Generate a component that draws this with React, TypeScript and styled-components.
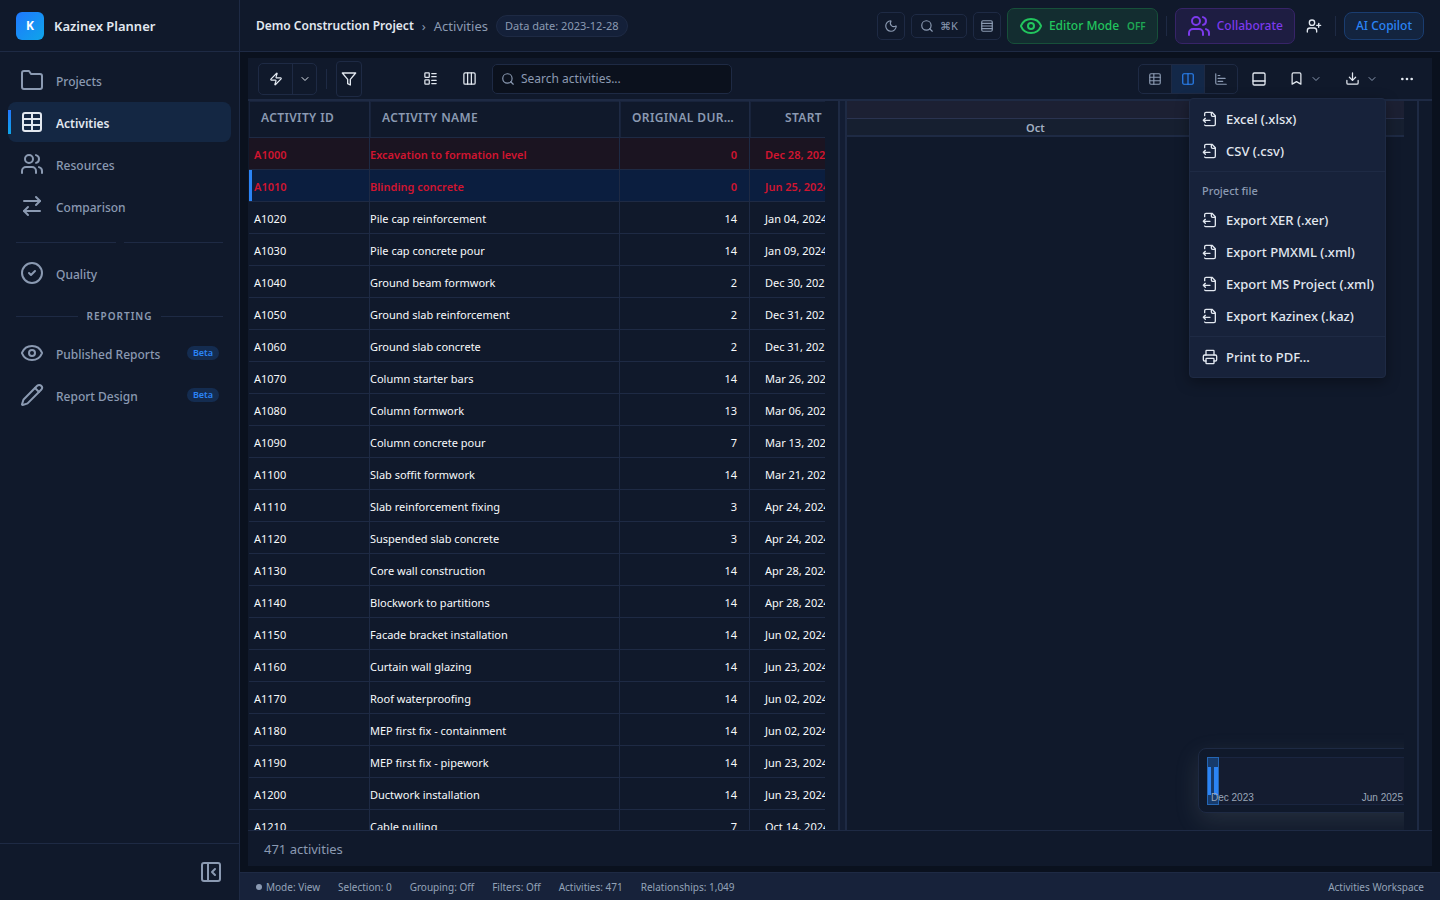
import React from 'react';
import styled, { createGlobalStyle, css } from 'styled-components';
import {
  ArrowRightLeft, Bookmark, ChartBar, ChevronDown, CircleCheck, Columns2, Columns3, Download, Ellipsis, Eye,
  LayoutList, Moon, PanelBottom, PanelLeftClose, Pencil, Printer, Rows4, Search, Table, UserPlus, Users, Zap,
} from 'lucide-react';

const c = {
  canvas: '#0a111e',
  surface: '#10192b',
  raised: '#17223a',
  line: '#1e2a44',
  text: '#e2e8f0',
  muted: '#8b9ab2',
  blue: '#2b84f6',
  red: '#d01530',
};

const Global = createGlobalStyle`
  *, *::before, *::after { box-sizing: border-box; }
  body { margin: 0; background: ${c.canvas}; color: ${c.text}; font: 12px/16px 'Noto Sans', 'Open Sans', sans-serif; }
  button, input { font: inherit; color: inherit; }
  button { background: none; border: 0; padding: 0; cursor: pointer; }
  svg { display: block; flex: none; }
`;

const Shell = styled.div`
  display: grid;
  grid-template-columns: 240px minmax(0, 1fr);
  height: 100vh;
  overflow: hidden;
`;

const Sidebar = styled.aside`
  display: flex;
  flex-direction: column;
  background: ${c.surface};
  border-right: 1px solid ${c.line};
`;

const Brand = styled.div`
  display: flex;
  align-items: center;
  gap: 10px;
  height: 52px;
  padding: 0 16px;
  border-bottom: 1px solid ${c.line};
  font-size: 13px;
  font-weight: 600;
`;

const BrandMark = styled.span`
  display: grid;
  place-items: center;
  width: 28px;
  height: 28px;
  border-radius: 6px;
  background: linear-gradient(135deg, #1f78ff, #0ea5e9);
  color: #fff;
  font-size: 12px;
  font-weight: 700;
`;

const Nav = styled.nav`
  display: flex;
  flex: 1;
  flex-direction: column;
  gap: 2px;
  padding: 8px;
`;

const NavLink = styled.a<{ $active?: boolean }>`
  position: relative;
  display: flex;
  align-items: center;
  gap: 12px;
  height: 40px;
  padding: 0 12px;
  border-radius: 8px;
  color: ${p => (p.$active ? c.text : c.muted)};
  background: ${p => (p.$active ? '#142743' : 'transparent')};
  font-size: 12px;
  font-weight: ${p => (p.$active ? 600 : 500)};
  text-decoration: none;
  ${p => p.$active && css`
    &::before {
      content: '';
      position: absolute;
      left: 0;
      top: 8px;
      width: 3px;
      height: 24px;
      background: linear-gradient(#2277ff, #0ea5e9);
    }
  `}
`;

const NavText = styled.span`
  padding-top: 3px;
`;

const Beta = styled.span`
  margin-left: auto;
  padding: 0 6px;
  border-radius: 7px;
  background: #142c50;
  color: ${c.blue};
  font-size: 9px;
  font-weight: 600;
  line-height: 14px;
`;

const Divider = styled.div`
  display: flex;
  align-items: center;
  gap: 8px;
  margin: 14px 8px 8px;
  color: ${c.muted};
  font-size: 10px;
  font-weight: 600;
  letter-spacing: 1px;
  line-height: 14px;
  &::before, &::after { content: ''; flex: 1; height: 1px; background: ${c.line}; }
`;

const SideFoot = styled.div`
  display: flex;
  justify-content: flex-end;
  padding: 16px;
  border-top: 1px solid ${c.line};
  color: ${c.muted};
`;

const Main = styled.div`
  display: flex;
  flex-direction: column;
  min-width: 0;
  min-height: 0;
`;

const TopBar = styled.header`
  display: flex;
  align-items: center;
  flex: none;
  height: 52px;
  padding: 0 16px;
  background: ${c.surface};
  border-bottom: 1px solid ${c.line};
  color: ${c.muted};
`;

const Crumbs = styled.div`
  display: flex;
  align-items: center;
  gap: 8px;
  margin-right: auto;
  font-size: 13px;
  strong { color: ${c.text}; font-size: 12px; font-weight: 600; }
`;

const DatePill = styled.span`
  padding: 0 8px;
  border: 1px solid ${c.line};
  border-radius: 11px;
  background: #142039;
  font-size: 11px;
  line-height: 20px;
`;

const TopActions = styled.div`
  display: flex;
  align-items: center;
  gap: 6px;
`;

const OutlineButton = styled.button<{ $h: number }>`
  display: flex;
  align-items: center;
  justify-content: center;
  gap: 6px;
  min-width: 28px;
  height: ${p => p.$h}px;
  padding: 0 ${p => (p.$h === 24 ? 8 : 0)}px;
  border: 1px solid ${c.line};
  border-radius: 5px;
  font-size: 11px;
`;

const tones = {
  green: ['#22c55e', '#132d30', '#17503a'],
  purple: ['#7c3aed', '#1e1d42', '#372468'],
  blue: [c.blue, '#13243f', '#1a3d70'],
};

const ToneButton = styled.button<{ $tone: keyof typeof tones; $small?: boolean }>`
  display: flex;
  align-items: center;
  gap: 6px;
  height: ${p => (p.$small ? 28 : 36)}px;
  padding: 1px 11px 0;
  border: 1px solid ${p => tones[p.$tone][2]};
  border-radius: ${p => (p.$small ? 8 : 7)}px;
  background: ${p => tones[p.$tone][1]};
  color: ${p => tones[p.$tone][0]};
  font-size: 12px;
  font-weight: 500;
  small { margin-left: 2px; font-size: 10px; font-weight: 600; opacity: .8; }
`;

const Rule = styled.span<{ $m: number }>`
  width: 1px;
  height: 20px;
  margin: 0 ${p => p.$m}px;
  background: ${c.line};
`;

const Workspace = styled.main`
  display: flex;
  flex: 1;
  flex-direction: column;
  min-height: 0;
  margin: 6px 8px;
  background: ${c.surface};
`;

const Toolbar = styled.div`
  display: flex;
  align-items: center;
  flex: none;
  height: 43px;
  padding: 0 10px;
  border-bottom: 2px solid ${c.line};
`;

const Group = styled.div`
  display: flex;
  border: 1px solid ${c.line};
  border-radius: 5px;
  overflow: hidden;
  button + button { border-left: 1px solid ${c.line}; }
`;

const ToolButton = styled.button<{ $w: number; $h?: number; $on?: boolean; $dim?: boolean; $framed?: boolean }>`
  display: flex;
  align-items: center;
  justify-content: center;
  gap: 6px;
  width: ${p => p.$w}px;
  height: ${p => p.$h ?? 28}px;
  color: ${p => (p.$on ? c.blue : p.$dim ? c.muted : c.text)};
  background: ${p => (p.$on ? '#132848' : 'transparent')};
  ${p => p.$framed && css`border: 1px solid ${c.line}; border-radius: 4px;`}
`;

const ListTools = styled.div`
  display: flex;
  margin-left: 49px;
`;

const Chevron = styled(ChevronDown)`
  color: ${c.muted};
`;

const SearchBox = styled.label`
  display: flex;
  align-items: center;
  gap: 6px;
  width: 240px;
  height: 30px;
  margin-left: 3px;
  padding: 0 8px;
  border: 1px solid ${c.line};
  border-radius: 5px;
  background: #0b111d;
  color: ${c.muted};
  input { flex: 1; min-width: 0; padding: 0; border: 0; outline: 0; background: none; font-size: 12px; }
  input::placeholder { color: ${c.muted}; opacity: 1; }
`;

const ToolEnd = styled.div`
  display: flex;
  align-items: center;
  margin-left: auto;
`;

const MenuAnchor = styled.div`
  position: relative;
`;

const Menu = styled.div`
  position: absolute;
  z-index: 5;
  top: 33px;
  right: 6px;
  width: 197px;
  padding: 4px 0;
  border: 1px solid ${c.line};
  border-radius: 4px;
  background: ${c.raised};
  box-shadow: 0 4px 14px rgba(0, 0, 0, .35);
`;

const MenuItem = styled.button`
  display: flex;
  align-items: center;
  gap: 8px;
  width: 100%;
  height: 32px;
  padding: 0 12px;
  font-size: 13px;
  font-weight: 500;
  white-space: nowrap;
`;

const MenuSection = styled.div`
  margin-top: 4px;
  padding-top: 4px;
  border-top: 1px solid ${c.line};
`;

const MenuLabel = styled.div`
  padding: 6px 12px 4px;
  color: ${c.muted};
  font-size: 11px;
  font-weight: 500;
  line-height: 18px;
`;

const Split = styled.div`
  display: flex;
  flex: 1;
  min-height: 0;
`;

const TablePane = styled.section`
  flex: 0 0 590px;
  min-width: 0;
  padding-right: 13px;
`;

const Clip = styled.div`
  height: 100%;
  padding-left: 1px;
  overflow: hidden;
`;

const Grid = styled.table`
  width: 598px;
  border-collapse: separate;
  border-spacing: 0;
  table-layout: fixed;
  white-space: nowrap;
`;

const Th = styled.th<{ $num?: boolean; $pad?: number }>`
  height: 37px;
  padding: 0 ${p => p.$pad ?? 12}px 2px 12px;
  overflow: hidden;
  border-right: 1px solid ${c.line};
  border-bottom: 1px solid ${c.line};
  box-shadow: inset 1px 1px 0 #18233b;
  color: ${c.muted};
  font-size: 12px;
  font-weight: 600;
  letter-spacing: .03em;
  text-align: ${p => (p.$num ? 'right' : 'left')};
  text-overflow: ellipsis;
`;

const Td = styled.td<{ $num?: boolean; $pad?: number }>`
  height: 32px;
  padding: 2px ${p => (p.$num ? 12 : 0)}px 0 ${p => p.$pad ?? 0}px;
  border-right: 1px solid ${c.line};
  border-bottom: 1px solid ${c.line};
  font-size: 11px;
  text-align: ${p => (p.$num ? 'right' : 'left')};
`;

const Row = styled.tr<{ $critical?: boolean; $selected?: boolean }>`
  color: ${p => (p.$critical ? c.red : '#f8fafc')};
  background: ${p => (p.$selected ? '#0b1e3f' : p.$critical ? '#1b1421' : 'transparent')};
  font-weight: ${p => (p.$critical ? 600 : 400)};
  ${p => p.$selected && css`td:first-child { box-shadow: inset 3px 0 0 ${c.blue}; }`}
`;

const Splitter = styled.div`
  flex: none;
  width: 9px;
  border: solid ${c.line};
  border-width: 0 2px;
  background: #131d33;
`;

const GanttPane = styled.section`
  flex: 1;
  min-width: 0;
  padding-right: 13px;
`;

const Gantt = styled.div`
  position: relative;
  height: 100%;
  overflow: hidden;
`;

const YearBand = styled.div`
  height: 18px;
  border-bottom: 1px solid #2a3350;
  background: #1c2033;
`;

const MonthBand = styled.div`
  height: 18px;
  padding-left: 179px;
  border-bottom: 2px solid ${c.line};
  background: #161f30;
  color: #a3afc2;
  font-size: 11px;
  font-weight: 600;
  line-height: 18px;
`;

const MiniMap = styled.div`
  position: absolute;
  right: -43px;
  bottom: 17px;
  width: 249px;
  height: 65px;
  padding: 8px;
  border: 1px solid ${c.line};
  border-radius: 8px;
  background: ${c.surface};
  box-shadow: 0 8px 24px rgba(150, 160, 160, .16);
`;

const MiniTrack = styled.div`
  position: relative;
  display: flex;
  align-items: flex-end;
  gap: 108px;
  height: 48px;
  padding: 0 4px;
  border: solid #1a2540;
  border-width: 1px 0;
  background: #141c30;
  color: #9aa6b8;
  font: 10px/12px 'Liberation Sans', sans-serif;
  white-space: nowrap;
  span { position: relative; }
`;

const MiniWindow = styled.div`
  position: absolute;
  left: 0;
  top: -1px;
  width: 12px;
  height: 48px;
  border: 1px solid #2466b4;
  background: linear-gradient(90deg, ${c.blue} 0 3px, transparent 3px 6px, ${c.blue} 6px) 0 9px / 100% 28px no-repeat, #173b6c;
`;

const Gutter = styled.div`
  flex: none;
  width: 15px;
  border-left: 2px solid ${c.line};
`;

const Count = styled.footer`
  flex: none;
  height: 36px;
  padding-left: 16px;
  border-top: 1px solid ${c.line};
  color: ${c.muted};
  font-size: 13px;
  line-height: 36px;
`;

const StatusBar = styled.footer`
  display: flex;
  align-items: center;
  flex: none;
  gap: 18px;
  height: 28px;
  padding: 0 16px;
  border-top: 1px solid ${c.line};
  background: ${c.raised};
  color: #94a3b8;
  font-size: 10px;
  span:last-child { margin-left: auto; }
`;

const Mode = styled.span`
  display: flex;
  align-items: center;
  gap: 4px;
  &::before { content: ''; width: 6px; height: 6px; border-radius: 50%; background: ${c.muted}; }
`;

const Svg = ({ size, children }: { size: number; children: React.ReactNode }) => (
  <svg width={size} height={size} viewBox="0 0 24 24" fill="none" stroke="currentColor" strokeWidth={2} strokeLinecap="round" strokeLinejoin="round">{children}</svg>
);
const FolderIcon = () => <Svg size={24}><path d="M22 19a2 2 0 0 1-2 2H4a2 2 0 0 1-2-2V5a2 2 0 0 1 2-2h5l2 3h9a2 2 0 0 1 2 2z" /></Svg>;
const FunnelIcon = () => <Svg size={16}><path d="M22 3H2l8 9.46V19l4 2v-8.54z" /></Svg>;
const TableViewIcon = () => <Svg size={14}><rect x="3" y="3" width="18" height="18" rx="2" /><path d="M3 9h18M3 15h18M10 3v18" /></Svg>;
const ExportIcon = () => (
  <Svg size={16}><path d="M4 7V4a2 2 0 0 1 2-2h9l5 5v13a2 2 0 0 1-2 2H6a2 2 0 0 1-2-1M14 2v4a2 2 0 0 0 2 2h4M5 11l-3 3 3 3M2 14h10" /></Svg>
);

const rows: [string, string, number, string][] = [
  ['A1000', 'Excavation to formation level', 0, 'Dec 28, 2023'],
  ['A1010', 'Blinding concrete', 0, 'Jun 25, 2024'],
  ['A1020', 'Pile cap reinforcement', 14, 'Jan 04, 2024'],
  ['A1030', 'Pile cap concrete pour', 14, 'Jan 09, 2024'],
  ['A1040', 'Ground beam formwork', 2, 'Dec 30, 2023'],
  ['A1050', 'Ground slab reinforcement', 2, 'Dec 31, 2023'],
  ['A1060', 'Ground slab concrete', 2, 'Dec 31, 2023'],
  ['A1070', 'Column starter bars', 14, 'Mar 26, 2024'],
  ['A1080', 'Column formwork', 13, 'Mar 06, 2024'],
  ['A1090', 'Column concrete pour', 7, 'Mar 13, 2024'],
  ['A1100', 'Slab soffit formwork', 14, 'Mar 21, 2024'],
  ['A1110', 'Slab reinforcement fixing', 3, 'Apr 24, 2024'],
  ['A1120', 'Suspended slab concrete', 3, 'Apr 24, 2024'],
  ['A1130', 'Core wall construction', 14, 'Apr 28, 2024'],
  ['A1140', 'Blockwork to partitions', 14, 'Apr 28, 2024'],
  ['A1150', 'Facade bracket installation', 14, 'Jun 02, 2024'],
  ['A1160', 'Curtain wall glazing', 14, 'Jun 23, 2024'],
  ['A1170', 'Roof waterproofing', 14, 'Jun 02, 2024'],
  ['A1180', 'MEP first fix - containment', 14, 'Jun 02, 2024'],
  ['A1190', 'MEP first fix - pipework', 14, 'Jun 23, 2024'],
  ['A1200', 'Ductwork installation', 14, 'Jun 23, 2024'],
  ['A1210', 'Cable pulling', 7, 'Oct 14, 2024'],
];

export default function App() {
  return (
    <>
      <Global />
      <Shell>
        <Sidebar>
          <Brand><BrandMark>K</BrandMark>Kazinex Planner</Brand>
          <Nav>
            <NavLink href="#projects"><FolderIcon /><NavText>Projects</NavText></NavLink>
            <NavLink href="#activities" $active aria-current="page"><Table size={24} /><NavText>Activities</NavText></NavLink>
            <NavLink href="#resources"><Users size={24} /><NavText>Resources</NavText></NavLink>
            <NavLink href="#comparison"><ArrowRightLeft size={24} /><NavText>Comparison</NavText></NavLink>
            <Divider />
            <NavLink href="#quality"><CircleCheck size={24} /><NavText>Quality</NavText></NavLink>
            <Divider>REPORTING</Divider>
            <NavLink href="#published"><Eye size={24} /><NavText>Published Reports</NavText><Beta>Beta</Beta></NavLink>
            <NavLink href="#design"><Pencil size={24} /><NavText>Report Design</NavText><Beta>Beta</Beta></NavLink>
          </Nav>
          <SideFoot><button aria-label="Collapse sidebar"><PanelLeftClose size={24} /></button></SideFoot>
        </Sidebar>

        <Main>
          <TopBar>
            <Crumbs>
              <strong>Demo Construction Project</strong>
              <span>›</span>
              <span>Activities</span>
              <DatePill>Data date: 2023-12-28</DatePill>
            </Crumbs>
            <TopActions>
              <OutlineButton $h={28} aria-label="Dark theme"><Moon size={14} /></OutlineButton>
              <OutlineButton $h={24}><Search size={14} />⌘K</OutlineButton>
              <OutlineButton $h={28} aria-label="Density"><Rows4 size={14} /></OutlineButton>
              <ToneButton $tone="green"><Eye size={24} />Editor Mode<small>OFF</small></ToneButton>
              <Rule $m={2} />
              <ToneButton $tone="purple"><Users size={24} />Collaborate</ToneButton>
              <ToolButton $w={26} aria-label="Invite"><UserPlus size={16} /></ToolButton>
              <Rule $m={2} />
              <ToneButton $tone="blue" $small>AI Copilot</ToneButton>
            </TopActions>
          </TopBar>

          <Workspace>
            <Toolbar>
              <Group>
                <ToolButton $w={33} $h={30} aria-label="Quick actions"><Zap size={14} /></ToolButton>
                <ToolButton $w={24} $h={30} aria-label="More quick actions"><ChevronDown size={12} /></ToolButton>
              </Group>
              <Rule $m={9} />
              <ToolButton $w={26} $h={36} $framed aria-label="Filter"><FunnelIcon /></ToolButton>
              <ListTools>
                <ToolButton $w={39} aria-label="Group by"><LayoutList size={15} /></ToolButton>
                <ToolButton $w={39} aria-label="Columns"><Columns3 size={15} /></ToolButton>
              </ListTools>
              <SearchBox><Search size={14} /><input type="text" aria-label="Search activities" placeholder="Search activities..." /></SearchBox>
              <ToolEnd>
                <Group>
                  <ToolButton $w={32} $dim aria-label="Table view"><TableViewIcon /></ToolButton>
                  <ToolButton $w={33} $on aria-label="Split view"><Columns2 size={14} /></ToolButton>
                  <ToolButton $w={33} $dim aria-label="Gantt view"><ChartBar size={14} /></ToolButton>
                </Group>
                <ToolButton $w={42} aria-label="Details panel"><PanelBottom size={16} /></ToolButton>
                <ToolButton $w={50} aria-label="Bookmarks"><Bookmark size={15} /><Chevron size={12} /></ToolButton>
                <MenuAnchor>
                  <ToolButton $w={62} aria-label="Export" aria-expanded="true"><Download size={15} /><Chevron size={12} /></ToolButton>
                  <Menu role="menu">
                    <MenuItem role="menuitem"><ExportIcon />Excel (.xlsx)</MenuItem>
                    <MenuItem role="menuitem"><ExportIcon />CSV (.csv)</MenuItem>
                    <MenuSection>
                      <MenuLabel>Project file</MenuLabel>
                      <MenuItem role="menuitem"><ExportIcon />Export XER (.xer)</MenuItem>
                      <MenuItem role="menuitem"><ExportIcon />Export PMXML (.xml)</MenuItem>
                      <MenuItem role="menuitem"><ExportIcon />Export MS Project (.xml)</MenuItem>
                      <MenuItem role="menuitem"><ExportIcon />Export Kazinex (.kaz)</MenuItem>
                    </MenuSection>
                    <MenuSection>
                      <MenuItem role="menuitem"><Printer size={16} />Print to PDF...</MenuItem>
                    </MenuSection>
                  </Menu>
                </MenuAnchor>
                <ToolButton $w={30} aria-label="More"><Ellipsis size={16} /></ToolButton>
              </ToolEnd>
            </Toolbar>

            <Split>
              <TablePane>
                <Clip>
                  <Grid>
                    <colgroup>
                      <col style={{ width: 121 }} />
                      <col style={{ width: 250 }} />
                      <col style={{ width: 130 }} />
                      <col />
                    </colgroup>
                    <thead>
                      <tr>
                        <Th>ACTIVITY ID</Th>
                        <Th>ACTIVITY NAME</Th>
                        <Th>ORIGINAL DURATION</Th>
                        <Th $num $pad={24}>START</Th>
                      </tr>
                    </thead>
                    <tbody>
                      {rows.map(([id, name, duration, start]) => (
                        <Row key={id} $critical={duration === 0} $selected={id === 'A1010'}>
                          <Td $pad={5}>{id}</Td>
                          <Td>{name}</Td>
                          <Td $num>{duration}</Td>
                          <Td $pad={15}>{start}</Td>
                        </Row>
                      ))}
                    </tbody>
                  </Grid>
                </Clip>
              </TablePane>
              <Splitter />
              <GanttPane>
                <Gantt>
                  <YearBand />
                  <MonthBand>Oct</MonthBand>
                  <MiniMap>
                    <MiniTrack><MiniWindow /><span>Dec 2023</span><span>Jun 2025</span></MiniTrack>
                  </MiniMap>
                </Gantt>
              </GanttPane>
              <Gutter />
            </Split>
            <Count>471 activities</Count>
          </Workspace>

          <StatusBar>
            <Mode>Mode: View</Mode>
            <span>Selection: 0</span>
            <span>Grouping: Off</span>
            <span>Filters: Off</span>
            <span>Activities: 471</span>
            <span>Relationships: 1,049</span>
            <span>Activities Workspace</span>
          </StatusBar>
        </Main>
      </Shell>
    </>
  );
}
